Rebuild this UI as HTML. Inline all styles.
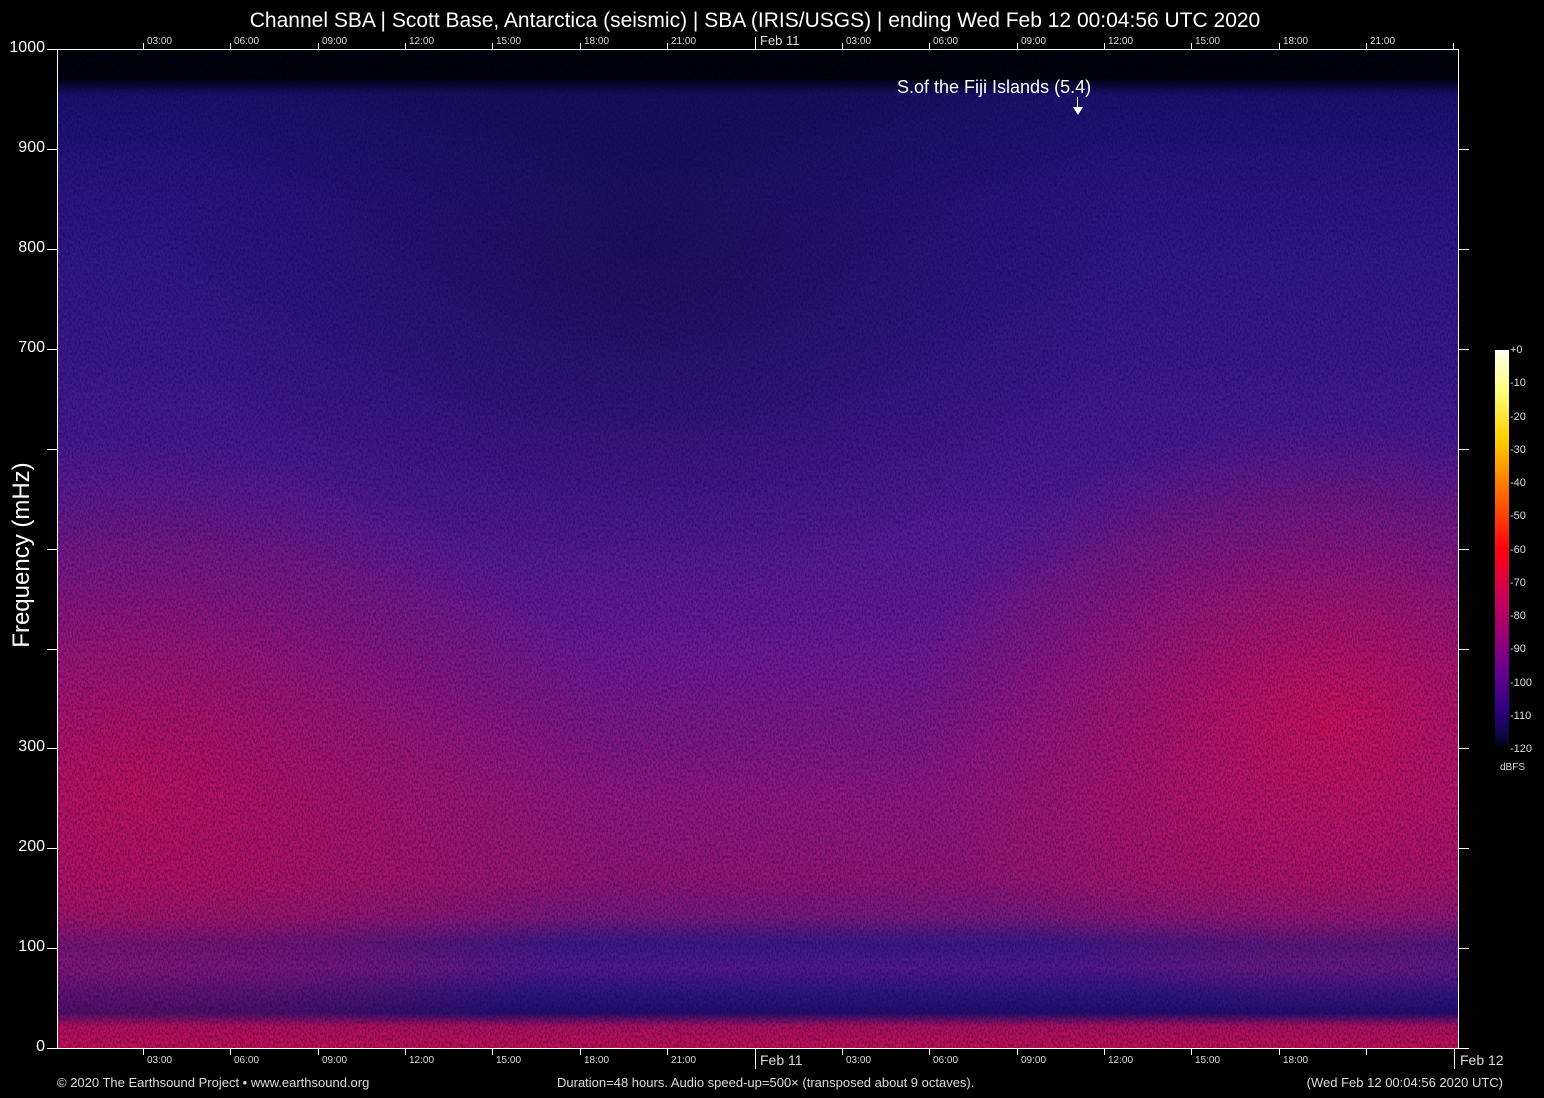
<!DOCTYPE html>
<html><head><meta charset="utf-8"><style>
html,body{margin:0;padding:0;background:#000;width:1544px;height:1098px;overflow:hidden;font-family:"Liberation Sans",sans-serif;color:#fff}
.a{position:absolute;white-space:nowrap}
.s{font-size:10px;color:#ddd}
.y{font-size:16px;text-align:right;width:45px;left:0}
.tk{position:absolute;background:#fff}
</style></head><body>
<div class="a" style="left:0;width:1510px;top:9px;text-align:center;font-size:21px">Channel SBA | Scott Base, Antarctica (seismic) | SBA (IRIS/USGS) | ending Wed Feb 12 00:04:56 UTC 2020</div>

<svg class="a" style="left:57px;top:50px" width="1401" height="998" viewBox="0 0 1401 998">
<defs>
<linearGradient id="g" x1="0" y1="0" x2="0" y2="1">
<stop offset="0" stop-color="#000"/>
<stop offset="0.028" stop-color="#000"/>
<stop offset="0.045" stop-color="#1c1268"/>
<stop offset="0.15" stop-color="#2e1680"/>
<stop offset="0.35" stop-color="#421a8c"/>
<stop offset="0.5" stop-color="#5a1c92"/>
<stop offset="0.62" stop-color="#741a8e"/>
<stop offset="0.75" stop-color="#94187a"/>
<stop offset="0.83" stop-color="#981670"/>
<stop offset="0.87" stop-color="#7a1a78"/>
<stop offset="0.895" stop-color="#3e1a82"/>
<stop offset="0.92" stop-color="#561a88"/>
<stop offset="0.945" stop-color="#30167a"/>
<stop offset="0.965" stop-color="#24106a"/>
<stop offset="0.978" stop-color="#b01058"/>
<stop offset="1" stop-color="#c8104f"/>
</linearGradient>
<radialGradient id="r1" cx="0.05" cy="0.74" r="0.35">
<stop offset="0" stop-color="#d01050" stop-opacity="0.8"/>
<stop offset="1" stop-color="#d01050" stop-opacity="0"/>
</radialGradient>
<radialGradient id="r2" cx="0.91" cy="0.67" r="0.3">
<stop offset="0" stop-color="#e0104c" stop-opacity="0.85"/>
<stop offset="1" stop-color="#e0104c" stop-opacity="0"/>
</radialGradient>
<radialGradient id="r3" cx="0.42" cy="0.2" r="0.35">
<stop offset="0" stop-color="#0a0830" stop-opacity="0.5"/>
<stop offset="1" stop-color="#0a0830" stop-opacity="0"/>
</radialGradient>
<filter id="n" x="0" y="0" width="100%" height="100%">
<feTurbulence type="fractalNoise" baseFrequency="0.6 0.35" numOctaves="2" seed="3"/>
<feColorMatrix type="matrix" values="0 0 0 0 0  0 0 0 0 0  0 0 0 0 0.1  0 0 0 -2.2 1.4"/>
</filter>
</defs>
<rect width="1401" height="998" fill="url(#g)"/>
<rect width="1401" height="998" fill="url(#r1)"/>
<rect width="1401" height="998" fill="url(#r2)"/>
<rect width="1401" height="998" fill="url(#r3)"/>
<rect x="0" y="0" width="1401" height="30" fill="#000"/>
<rect width="1401" height="998" filter="url(#n)" opacity="0.45"/>
</svg>

<div class="tk" style="left:57px;top:49px;width:1402px;height:1px"></div>
<div class="tk" style="left:57px;top:1048px;width:1402px;height:1px"></div>
<div class="tk" style="left:57px;top:49px;width:1px;height:1000px"></div>
<div class="tk" style="left:1458px;top:49px;width:1px;height:1000px"></div>

<div class="tk" style="left:47px;top:49px;width:10px;height:1px"></div>
<div class="tk" style="left:47px;top:149px;width:10px;height:1px"></div>
<div class="tk" style="left:47px;top:249px;width:10px;height:1px"></div>
<div class="tk" style="left:47px;top:349px;width:10px;height:1px"></div>
<div class="tk" style="left:47px;top:449px;width:10px;height:1px"></div>
<div class="tk" style="left:47px;top:549px;width:10px;height:1px"></div>
<div class="tk" style="left:47px;top:649px;width:10px;height:1px"></div>
<div class="tk" style="left:47px;top:748px;width:10px;height:1px"></div>
<div class="tk" style="left:47px;top:848px;width:10px;height:1px"></div>
<div class="tk" style="left:47px;top:948px;width:10px;height:1px"></div>
<div class="tk" style="left:47px;top:1048px;width:10px;height:1px"></div>
<div class="tk" style="left:1459px;top:349px;width:10px;height:1px"></div>
<div class="tk" style="left:1459px;top:449px;width:10px;height:1px"></div>
<div class="tk" style="left:1459px;top:549px;width:10px;height:1px"></div>
<div class="tk" style="left:1459px;top:649px;width:10px;height:1px"></div>
<div class="tk" style="left:1459px;top:748px;width:10px;height:1px"></div>
<div class="tk" style="left:1459px;top:848px;width:10px;height:1px"></div>
<div class="tk" style="left:1459px;top:948px;width:10px;height:1px"></div>
<div class="tk" style="left:1459px;top:149px;width:10px;height:1px"></div>
<div class="tk" style="left:1459px;top:249px;width:10px;height:1px"></div>
<div class="tk" style="left:1459px;top:1048px;width:10px;height:1px"></div>

<div class="a y" style="top:39px">1000</div>
<div class="a y" style="top:139px">900</div>
<div class="a y" style="top:239px">800</div>
<div class="a y" style="top:339px">700</div>
<div class="a y" style="top:738px">300</div>
<div class="a y" style="top:838px">200</div>
<div class="a y" style="top:938px">100</div>
<div class="a y" style="top:1038px">0</div>

<div class="a" style="left:22px;top:555px;font-size:24px;transform:translate(-50%,-50%) rotate(-90deg);transform-origin:center">Frequency (mHz)</div>

<div class="tk" style="left:143px;top:43px;width:1px;height:6px"></div>
<div class="tk" style="left:230px;top:43px;width:1px;height:6px"></div>
<div class="tk" style="left:318px;top:43px;width:1px;height:6px"></div>
<div class="tk" style="left:405px;top:43px;width:1px;height:6px"></div>
<div class="tk" style="left:492px;top:43px;width:1px;height:6px"></div>
<div class="tk" style="left:580px;top:43px;width:1px;height:6px"></div>
<div class="tk" style="left:667px;top:43px;width:1px;height:6px"></div>
<div class="tk" style="left:755px;top:37px;width:1px;height:12px"></div>
<div class="tk" style="left:842px;top:43px;width:1px;height:6px"></div>
<div class="tk" style="left:929px;top:43px;width:1px;height:6px"></div>
<div class="tk" style="left:1017px;top:43px;width:1px;height:6px"></div>
<div class="tk" style="left:1104px;top:43px;width:1px;height:6px"></div>
<div class="tk" style="left:1191px;top:43px;width:1px;height:6px"></div>
<div class="tk" style="left:1279px;top:43px;width:1px;height:6px"></div>
<div class="tk" style="left:1366px;top:43px;width:1px;height:6px"></div>
<div class="tk" style="left:1453px;top:43px;width:1px;height:6px"></div>
<div class="a s" style="left:147px;top:36px">03:00</div>
<div class="a s" style="left:234px;top:36px">06:00</div>
<div class="a s" style="left:322px;top:36px">09:00</div>
<div class="a s" style="left:409px;top:36px">12:00</div>
<div class="a s" style="left:496px;top:36px">15:00</div>
<div class="a s" style="left:584px;top:36px">18:00</div>
<div class="a s" style="left:671px;top:36px">21:00</div>
<div class="a" style="left:760px;top:33px;font-size:13px;color:#ddd">Feb 11</div>
<div class="a s" style="left:846px;top:36px">03:00</div>
<div class="a s" style="left:933px;top:36px">06:00</div>
<div class="a s" style="left:1021px;top:36px">09:00</div>
<div class="a s" style="left:1108px;top:36px">12:00</div>
<div class="a s" style="left:1195px;top:36px">15:00</div>
<div class="a s" style="left:1283px;top:36px">18:00</div>
<div class="a s" style="left:1370px;top:36px">21:00</div>

<div class="tk" style="left:143px;top:1049px;width:1px;height:6px"></div>
<div class="tk" style="left:230px;top:1049px;width:1px;height:6px"></div>
<div class="tk" style="left:318px;top:1049px;width:1px;height:6px"></div>
<div class="tk" style="left:405px;top:1049px;width:1px;height:6px"></div>
<div class="tk" style="left:492px;top:1049px;width:1px;height:6px"></div>
<div class="tk" style="left:580px;top:1049px;width:1px;height:6px"></div>
<div class="tk" style="left:667px;top:1049px;width:1px;height:6px"></div>
<div class="tk" style="left:755px;top:1049px;width:1px;height:20px"></div>
<div class="tk" style="left:842px;top:1049px;width:1px;height:6px"></div>
<div class="tk" style="left:929px;top:1049px;width:1px;height:6px"></div>
<div class="tk" style="left:1017px;top:1049px;width:1px;height:6px"></div>
<div class="tk" style="left:1104px;top:1049px;width:1px;height:6px"></div>
<div class="tk" style="left:1191px;top:1049px;width:1px;height:6px"></div>
<div class="tk" style="left:1279px;top:1049px;width:1px;height:6px"></div>
<div class="tk" style="left:1366px;top:1049px;width:1px;height:6px"></div>
<div class="tk" style="left:1454px;top:1049px;width:1px;height:20px"></div>
<div class="a s" style="left:147px;top:1055px">03:00</div>
<div class="a s" style="left:234px;top:1055px">06:00</div>
<div class="a s" style="left:322px;top:1055px">09:00</div>
<div class="a s" style="left:409px;top:1055px">12:00</div>
<div class="a s" style="left:496px;top:1055px">15:00</div>
<div class="a s" style="left:584px;top:1055px">18:00</div>
<div class="a s" style="left:671px;top:1055px">21:00</div>
<div class="a" style="left:760px;top:1052px;font-size:14px;color:#ddd">Feb 11</div>
<div class="a s" style="left:846px;top:1055px">03:00</div>
<div class="a s" style="left:933px;top:1055px">06:00</div>
<div class="a s" style="left:1021px;top:1055px">09:00</div>
<div class="a s" style="left:1108px;top:1055px">12:00</div>
<div class="a s" style="left:1195px;top:1055px">15:00</div>
<div class="a s" style="left:1283px;top:1055px">18:00</div>
<div class="a" style="left:1460px;top:1052px;font-size:14px;color:#ddd">Feb 12</div>

<div class="a" style="left:897px;top:77px;font-size:18px">S.of the Fiji Islands (5.4)</div>
<div class="tk" style="left:1077px;top:97px;width:1px;height:11px"></div>
<div class="a" style="left:1073px;top:107px;width:0;height:0;border-left:5px solid transparent;border-right:5px solid transparent;border-top:8px solid #fff"></div>

<div class="a" style="left:1495px;top:350px;width:14px;height:399px;background:linear-gradient(#fffff0,#ffff80 10%,#ffd000 22%,#ff7000 35%,#ff0010 50%,#d00050 60%,#a00070 70%,#6a0090 80%,#300080 90%,#0a0840 97%,#000)"></div>
<div class="a" style="left:1510px;top:334px;font-size:11px;color:#ddd;line-height:33.25px">+0<br>-10<br>-20<br>-30<br>-40<br>-50<br>-60<br>-70<br>-80<br>-90<br>-100<br>-110<br>-120</div>
<div class="a" style="left:1500px;top:762px;font-size:10px;color:#ddd">dBFS</div>

<div class="a" style="left:57px;top:1075px;font-size:13px;color:#ddd">© 2020 The Earthsound Project • www.earthsound.org</div>
<div class="a" style="left:557px;top:1075px;font-size:13px;color:#ddd">Duration=48 hours. Audio speed-up=500× (transposed about 9 octaves).</div>
<div class="a" style="right:41px;top:1075px;font-size:13px;color:#ddd">(Wed Feb 12 00:04:56 2020 UTC)</div>
</body></html>
